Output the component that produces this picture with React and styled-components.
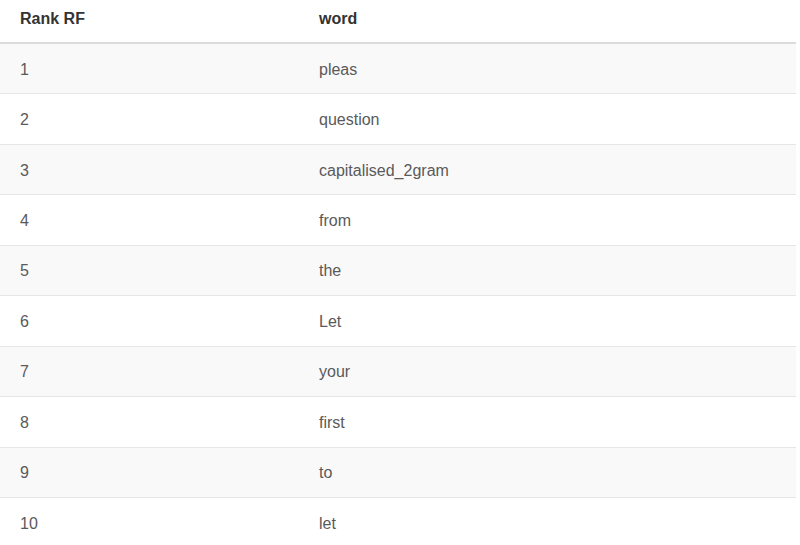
import React from "react";
import styled, { createGlobalStyle } from "styled-components";

const GlobalStyle = createGlobalStyle`
  body {
    margin: 0;
    background: #ffffff;
    font-family: "Liberation Sans", Arial, sans-serif;
  }
`;

const Table = styled.div`
  width: 796px;
  display: flex;
  flex-direction: column;
`;

const HeadRow = styled.div`
  display: grid;
  grid-template-columns: 299px 1fr;
  align-items: center;
  height: 44px;
  padding-bottom: 5px;
  box-sizing: border-box;
  border-bottom: 2px solid #dcdcdc;
`;

const HeadCell = styled.div`
  padding-left: 20px;
  font-size: 16px;
  font-weight: 700;
  color: #333333;
`;

const Row = styled.div`
  display: grid;
  grid-template-columns: 299px 1fr;
  align-items: center;
  height: 49.44px;
  border-bottom: 1px solid ${(p) => (p.$last ? "transparent" : "#e6e6e6")};
  background: ${(p) => (p.$odd ? "#f9f9f9" : "#ffffff")};
`;

const Cell = styled.div`
  padding: 2px 0 0 20px;
  font-size: 16px;
  color: #5a5a5a;
`;

const rows = [
  "pleas",
  "question",
  "capitalised_2gram",
  "from",
  "the",
  "Let",
  "your",
  "first",
  "to",
  "let",
];

export default function App() {
  return (
    <>
      <GlobalStyle />
      <Table>
        <HeadRow>
          <HeadCell>Rank RF</HeadCell>
          <HeadCell>word</HeadCell>
        </HeadRow>
        {rows.map((w, i) => (
          <Row key={i} $odd={i % 2 === 0} $last={i === rows.length - 1}>
            <Cell>{i + 1}</Cell>
            <Cell>{w}</Cell>
          </Row>
        ))}
      </Table>
    </>
  );
}
